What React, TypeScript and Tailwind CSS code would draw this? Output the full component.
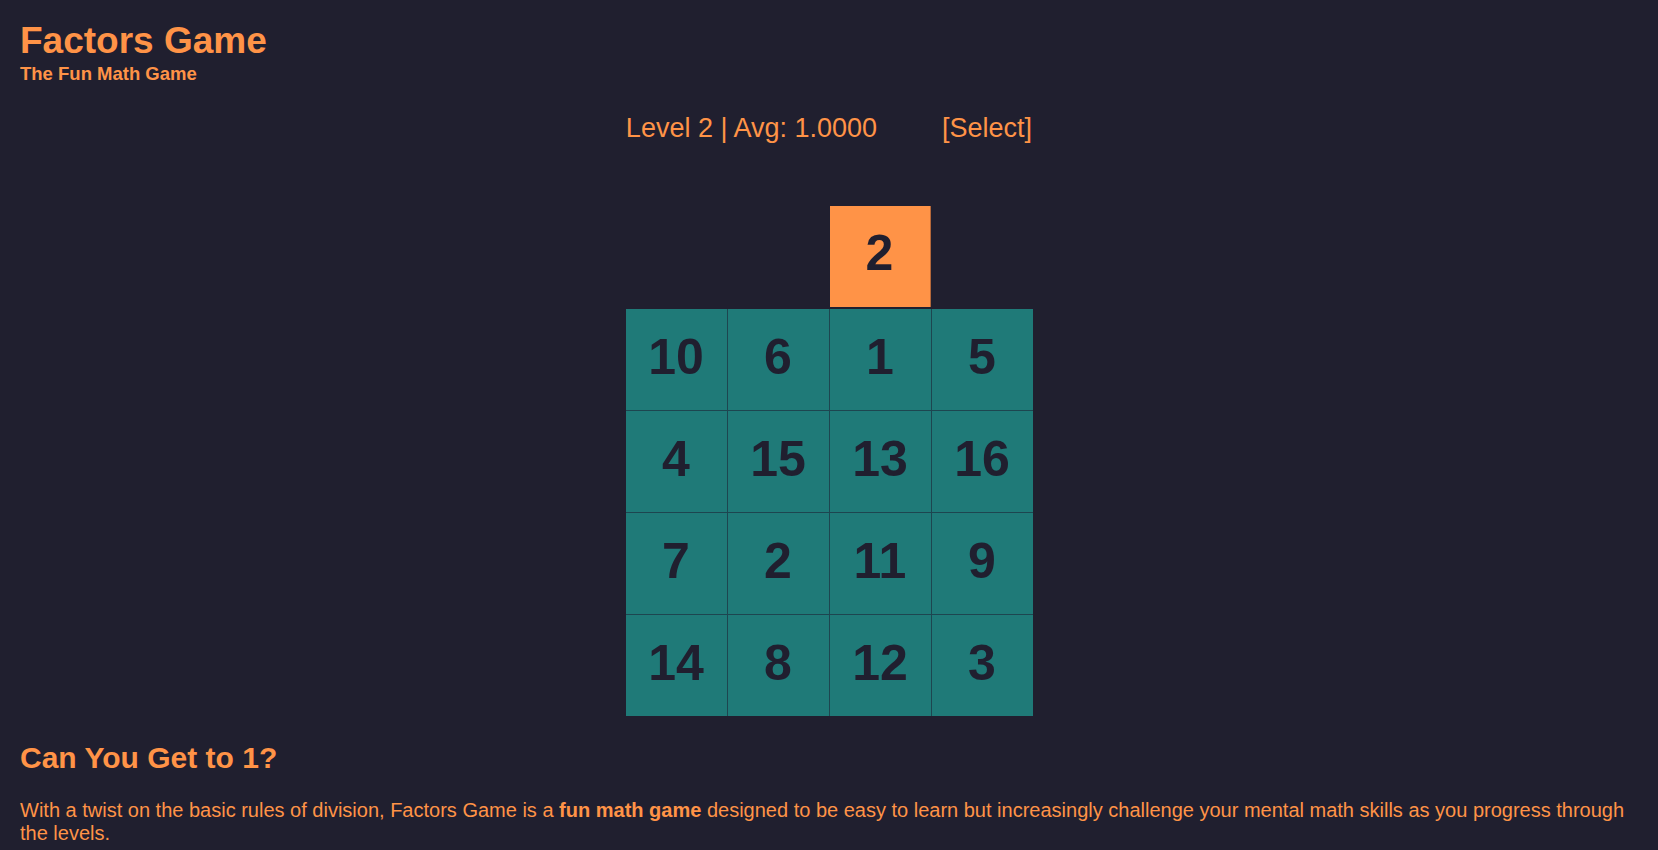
import React from "react";

const grid = [
  [10, 6, 1, 5],
  [4, 15, 13, 16],
  [7, 2, 11, 9],
  [14, 8, 12, 3],
];

export default function App() {
  return (
    <div
      className="min-h-[850px] w-full bg-[#201f2f] px-5 text-[#ff9347]"
      style={{ fontFamily: '"Liberation Sans", Arial, sans-serif' }}
    >
      <header className="pt-[20px]">
        <h1 className="text-[37px] font-bold leading-[42px]">Factors Game</h1>
        <div className="mt-[1px] text-[18.5px] font-bold leading-[21px]">The Fun Math Game</div>
      </header>

      <div className="mt-[29px] flex justify-center gap-[65px] text-[27px] leading-[31px]">
        <span>Level 2 | Avg: 1.0000</span>
        <span className="cursor-pointer">[Select]</span>
      </div>

      <div className="mt-[62px] flex flex-col items-center">
        <div className="flex w-[407px]">
          <div className="w-[204px]" />
          <div className="flex h-[101px] w-[101px] items-center justify-center border-r border-[#b5683a] bg-[#ff9347] pb-1.5 text-[50px] font-bold text-[#201f2f]">
            2
          </div>
        </div>
        <div className="mt-[2px] grid w-[407px] grid-cols-4 gap-px bg-[#1d4650]">
          {grid.flat().map((n, i) => (
            <div
              key={i}
              className="flex h-[101px] items-center justify-center bg-[#1f7a78] pb-1 text-[50px] font-bold text-[#201f2f]"
            >
              {n}
            </div>
          ))}
        </div>
      </div>

      <h2 className="mt-[25px] text-[30px] font-bold leading-[34px]">Can You Get to 1?</h2>
      <p className="mt-[24px] pb-4 text-[20px] leading-[23px]">
        With a twist on the basic rules of division, Factors Game is a <b>fun math game</b> designed to be easy to learn but
        increasingly challenge your mental math skills as you progress through the levels.
      </p>
    </div>
  );
}
